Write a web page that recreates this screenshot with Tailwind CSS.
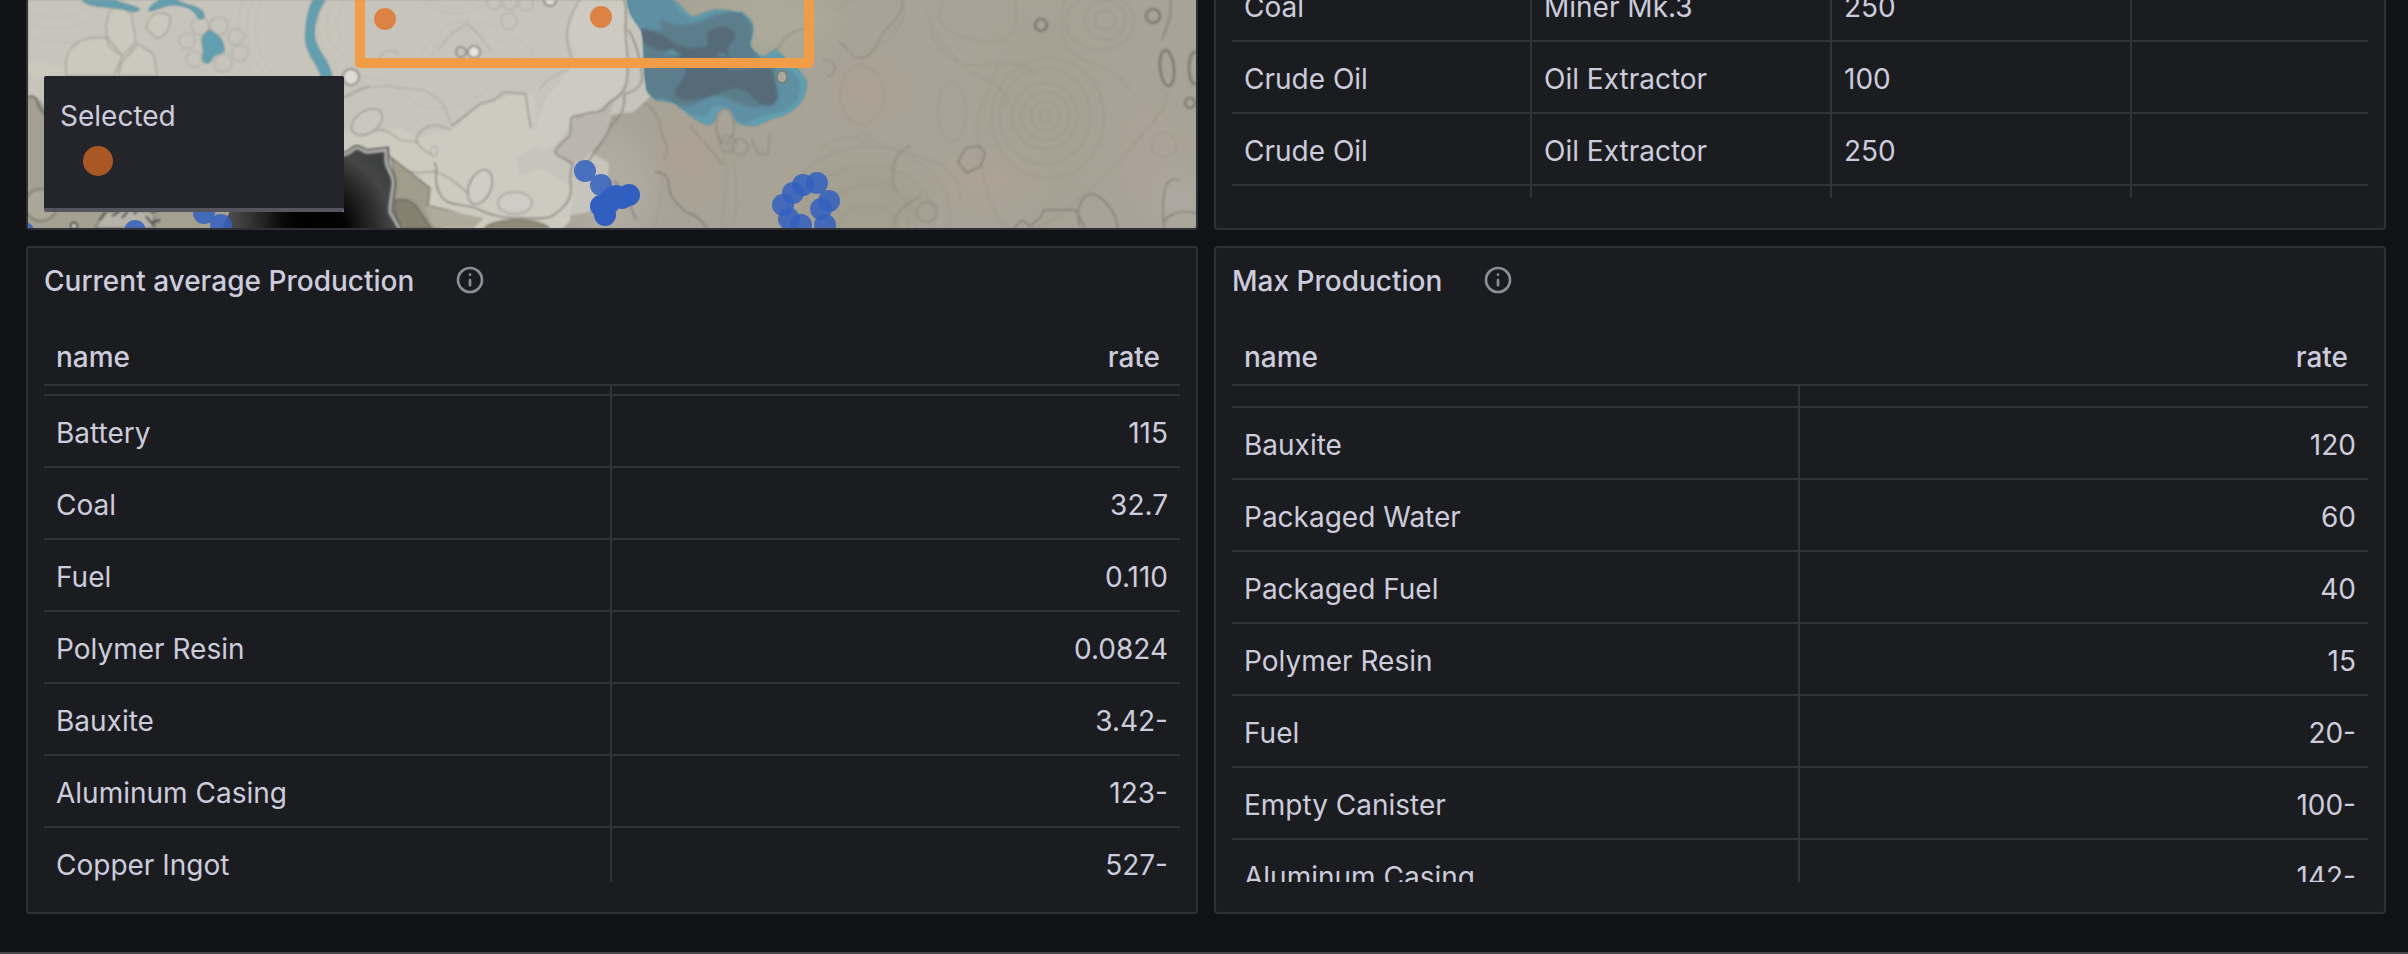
<!DOCTYPE html>
<html lang="en">
<head>
<meta charset="utf-8">
<meta name="viewport" content="width=device-width, initial-scale=1">
<title>Production dashboard</title>
<script src="https://cdn.jsdelivr.net/npm/@tailwindcss/browser@4"></script>
</head>
<body class="bg-[#111216] text-[#ccccdc] font-['Inter',sans-serif] text-[28px] leading-[44px]">
<main class="h-screen flex flex-col gap-4 overflow-hidden pl-[26px] pr-[22px] pb-[38px] border-b-2 border-[#47464b]">

  <div class="grid grid-cols-2 gap-4 h-[230px] shrink-0">
    <!-- World map -->
    <section aria-label="Map" class="relative overflow-hidden rounded-b border-2 border-t-0 border-[#2f3036] bg-[#a8a496]">
      <svg class="block w-full h-full" viewBox="28 0 1168 228" preserveAspectRatio="xMidYMid slice" role="img" aria-label="World map">
        <defs>
          <radialGradient id="void" gradientUnits="userSpaceOnUse" cx="308" cy="232" r="105">
            <stop offset="0" stop-color="#000"/><stop offset=".35" stop-color="#030303"/><stop offset=".62" stop-color="#2a2a2a"/><stop offset=".8" stop-color="#464646"/><stop offset="1" stop-color="#3c3f3e"/>
          </radialGradient>
          <linearGradient id="voidFade" x1="0" x2="1"><stop offset="0" stop-color="#555"/><stop offset=".3" stop-color="#3a3a3a"/><stop offset=".75" stop-color="#0c0c0c"/><stop offset="1" stop-color="#000"/></linearGradient>
          <filter id="soft" x="-20%" y="-20%" width="140%" height="140%"><feGaussianBlur stdDeviation="14"/></filter>
          <filter id="edge" x="-5%" y="-5%" width="110%" height="110%"><feGaussianBlur stdDeviation=".8"/></filter>
          <filter id="depth" x="-10%" y="-10%" width="120%" height="120%"><feGaussianBlur stdDeviation="1.8"/></filter>
          <path id="lake" d="M627 0c2 16 8 20 14 30 4 10 2 38 5 54 0 8 4 12 10 16 8 2 16 0 22 6 8 6 18 14 26 18 6 2 8 0 11-4 2-8 4-12 10-12s8 6 10 12c4 6 14 6 22 5 10-4 16-8 24-9 12-4 22-14 24-24 2-8 2-12-1-14-4-8-12-14-18-18-2-4-8-8-11-11-4 4-8 7-14 8-4-4-8-6-10-10s2-12 2-18-2-10-8-14c-2-4-6-2-10-3-6-2-12-2-20-2-6 0-12 4-22 7-6-2-10-10-14-12-2-4-6-4-9-6z"/>
          <clipPath id="lakeClip"><use href="#lake"/></clipPath>
        </defs>
        <rect x="28" width="1168" height="228" fill="#a7a396"/>
        <!-- ground tints -->
        <g filter="url(#soft)">
          <ellipse cx="690" cy="155" rx="30" ry="50" fill="#aba194"/>
          <ellipse cx="870" cy="90" rx="40" ry="35" fill="#aba195"/>
          <ellipse cx="1040" cy="115" rx="60" ry="110" fill="#a5a294"/>
          <ellipse cx="985" cy="180" rx="50" ry="30" fill="#aca296"/>
          <ellipse cx="1150" cy="160" rx="30" ry="60" fill="#aba397"/>
          <ellipse cx="770" cy="20" rx="60" ry="30" fill="#acaa9a"/>
          <ellipse cx="610" cy="190" rx="40" ry="60" fill="#b0aba1"/>
          <ellipse cx="860" cy="200" rx="70" ry="40" fill="#a39f91"/>
          <ellipse cx="1180" cy="200" rx="20" ry="20" fill="#b0aca4"/>
        </g>
        <g filter="url(#edge)" fill="none" stroke="#8e8b7d" stroke-width="1.4" opacity=".3">
          <circle cx="1045" cy="116" r="6"/><circle cx="1045" cy="116" r="14"/><circle cx="1045" cy="116" r="24"/><circle cx="1045" cy="116" r="33"/><ellipse cx="1045" cy="116" rx="45" ry="48"/><ellipse cx="1048" cy="118" rx="56" ry="60"/>
          <circle cx="1105" cy="20" r="10"/><circle cx="1105" cy="20" r="20"/><ellipse cx="1100" cy="22" rx="34" ry="28"/>
          <ellipse cx="868" cy="230" rx="30" ry="25"/><ellipse cx="868" cy="225" rx="48" ry="40"/><ellipse cx="868" cy="220" rx="66" ry="54"/><ellipse cx="868" cy="215" rx="82" ry="68"/>
          <ellipse cx="952" cy="112" rx="14" ry="30"/><ellipse cx="862" cy="95" rx="22" ry="29"/><circle cx="864" cy="138" r="6"/><circle cx="1164" cy="145" r="12"/>
          <path d="M930 30q15 40 55 35t50 10M925 10q20 50 60 70t10 30M945 0q-20 30 30 40t40-40M1065 0q-12 50 20 60t45 30M820 150q20-20 50-10t60 20 30 40M715 130q20 30 5 98M725 140q18 34 8 88M880 180q30 10 28 48M1000 60q-10 30-20 50t10 90 110-20 60-90"/>
          <path d="M837 10q20-20 60-10M900 0q10 20-10 38t-30 20M660 170q6 20-6 58"/>
        </g>
        <g filter="url(#edge)" fill="none" stroke="#77756b" stroke-width="1.4">
          <g opacity=".45">
            <path d="M903 0c2 14-14 24-20 34s-12 24-22 24-14-12-22-16M775 52c8-12 14-22 32-24M628 98c20 2 30 14 32 28s12 20 4 34M690 125c6 12 20 20 32 40M752 140l6 14 10 0 2-20M823 60c12-2 18 14 4 16M895 190c-6-20 0-40 16-44"/>
            <ellipse cx="725" cy="126" rx="9" ry="17"/><circle cx="728" cy="144" r="8"/><circle cx="740" cy="147" r="8"/>
            <circle cx="927" cy="212" r="10"/><path d="M895 228c-6-10 10-24 26-32"/>
          </g>
          <g opacity=".75">
            <path d="M655 172c12 0 14 8 14 16s14 24 22 26 12 10 18 16M614 180c10 12 16 24 22 40"/>
            <path d="M958 162l8-14 14-2 5 8-4 12-14 7zM1014 228l8-8 8 6 10-8 4-8h32l10 20M1080 226c-6-20 4-32 12-32s24 16 26 34M1164 228c-4-50 6-50 16-48M1163 224c6-14 26-14 34-10M1171 0l-1 18-8 22"/>
          </g>
          <g stroke-width="2.2">
            <circle cx="1041" cy="25" r="6"/><circle cx="1153" cy="16" r="7"/><ellipse cx="1167" cy="68" rx="7" ry="18" transform="rotate(-6 1167 68)"/><ellipse cx="1195" cy="68" rx="6" ry="16"/><circle cx="1190" cy="103" r="5"/>
          </g>
        </g>

        <!-- pale plateau -->
        <g filter="url(#edge)">
          <path d="M28 97l12 3 10 14 40 60 130 20 124-39 46-5 17 20h30l22 2 2 18 14 16 40 10 30 4 44-8 17-17 3-32-18-11 15-19 5-18 22-3 16-14 14-18 1-37-2-23 4-20V0H28z" fill="#c7c4bb"/>
          <path d="M28 97l9 2 8 16v113H28zM28 205h210l-40 23H28z" fill="#a3a092"/>
          <path d="M28 60c20 0 30 10 50 12s50 0 60 4H28z" fill="#cbc8bd"/>
          <path d="M110 10c10-6 20-2 22 8l4 24-14 14-14-10-2-22zM118 76l4-14 16-18 16 10 3 22zM66 60c4-20 24-24 42-22l14 18-8 20H66zM146 28c4-16 14-18 24-12 2 10-6 24-14 22z" fill="#cbc8bd" stroke="#a3a096" stroke-width="1.3"/>
          <g fill="none" stroke="#b0ada3" stroke-width="1.5" opacity=".8">
            <circle cx="200" cy="26" r="9"/><circle cx="219" cy="26" r="9"/><circle cx="187" cy="41" r="8"/><circle cx="236" cy="37" r="8"/><circle cx="240" cy="53" r="8"/><circle cx="223" cy="63" r="9"/><circle cx="194" cy="59" r="8"/>
            <circle cx="494" cy="2" r="7"/><circle cx="510" cy="3" r="7"/><circle cx="526" cy="4" r="7"/><circle cx="509" cy="21" r="8"/>
            <path d="M438 50l14-16 15-11 14 14 10 14M344 98l20-10 20-2 40 4 18 12 10 24M380 58c4-10 14-8 18-4M614 24c8 8 12 18 10 28M540 90c6-14 22-16 34-24M580 68c0 16 6 26 14 24s14-16 16-24"/>
          </g>
          <g fill="none" stroke="#b5b2a7" stroke-width="1" opacity=".5">
            <path d="M262 0q-18 38 12 76M253 0q-18 38 12 76M244 0q-16 38 10 76M318 0q-26 38 12 62M327 0q-26 38 16 62M336 0q-26 38 18 62M345 0q-20 30 8 52M28 24q40 14 70-10M28 36q40 14 64 0M28 12q40 14 70-10"/>
            <path d="M430 56q20-40 60-20t20 22M420 56q30-54 80-26t25 26M430 0q20 16 50 0M420 0q34 28 70 0M350 78q30-6 60 20t80-10"/>
          </g>
          <path d="M344 130l16 8 22-6 18-4 18 10 22-6 12-2 28-26 22-4 10-8 22 2 2 16-2 16 8 16-12 8-14 8 4 18 20-8 22 12 11 8-3 33-17 17-40 8-34-4-38-8-14-20-2-22-32-2-16-22-24 2-21 3z" fill="#cdcac0"/>
          <path d="M574 115l20-4 10-4 12-10-8 22-2 18-24 24-12 4-16-13 16-18z" fill="#bab6ad"/>
          <path d="M580 0h47l-2 22 4 22-2 38-14 16-16 14-22 3-12 20-6 8-16 8-4-22c0-10 6-30 22-46 8-12 20-24 14-34-8-14-2-34 4-49z" fill="#cdcac1"/>
          <path d="M580 0c-10 14-14 30-13 40s4 14 4 18" fill="none" stroke="#a09d93" stroke-width="1.4"/>
          <g fill="none" stroke="#88867c" stroke-width="1.6">
            <path d="M452 126l28-22 14-4 10-8 22 2 2 18 3 16" opacity=".7"/>
            <path d="M624 0c4 10 0 24 2 40s2 32 1 40-6 16-14 20-8 12-18 12-12 4-20 4-2 16-6 20-14 12-14 16 14 8 18 12c-6 14 0 22-3 32s-12 16-18 20-24 2-36 2-24-2-36-8-24-4-32-8-12-14-12-24 2-10-2-16M628 30c8 10 12 30 14 44s-10 18-18 20c2 24-10 24-14 34s-12 18-22 34"/>
            <path d="M434 156c-8-4-14-8-17-14s6-14 12-16 14 0 22 4M407 170c10 6 22 0 30 2s24 14 40 30" opacity=".55"/>
            <path d="M385 150l25 38c10 4 14 8 14 18l8 22M430 206c14 4 20 4 34 10" stroke="#7a786c"/>
            <path d="M344 96c10-2 14-8 26-10M364 136c10-10 22-8 36 4l18 2" opacity=".5"/>
          </g>
          <path d="M392 158l38 30-2 18 14 22h-46l-4-20 2-24z" fill="#a19d8d" stroke="#716e61" stroke-width="1.3"/>
          <path d="M395 200c12-2 20 2 24 10l12 18h-35z" fill="#858070" stroke="#615e51" stroke-width="1.2"/>
          <path d="M424 206l30 6 30 6-10 10h-40z" fill="#aeaa9c"/>
          <path d="M484 228c8-10 52-12 66 0z" fill="#8f8a79" stroke="#716e61"/>
          <ellipse cx="480" cy="187" rx="11" ry="18" transform="rotate(22 480 187)" fill="#d0cdc6" stroke="#928f86" stroke-width="1.6"/>
          <ellipse cx="515" cy="203" rx="17" ry="11" fill="#cfccc5" stroke="#a6a39a" stroke-width="1.5"/>
          <ellipse cx="367" cy="122" rx="17" ry="11" transform="rotate(-34 367 122)" fill="#cac7be" stroke="#a09d94" stroke-width="1.5"/>
          <ellipse cx="434" cy="151" rx="3" ry="5" fill="#d0cec7" stroke="#a09d94"/>
          <circle cx="461" cy="52" r="5" fill="#c8c5bd" stroke="#8f8c84" stroke-width="2"/>
          <circle cx="474" cy="52" r="6" fill="#e6e3df" stroke="#8f8c84" stroke-width="2"/>
          <circle cx="351" cy="77" r="8" fill="#dfdcd8" stroke="#8f8c84" stroke-width="2"/>
          <path d="M544 0c0 8 12 8 12 0" fill="#dedbd6" stroke="#85827a" stroke-width="2"/>
        </g>

        <!-- unexplored void -->
        <path d="M225 228l6-16h113v-57l13-7 10 4 18-2 2 18 6 14-2 30 6 16z" fill="url(#void)"/>
        <path d="M222 228l8-17h70v17z" fill="url(#voidFade)"/>
        <g filter="url(#edge)" fill="none">
          <path d="M340 155c12 0 12-7 17-7s6 5 12 4l17-2c0 8-1 12 2 18s6 10 5 18-3 16-3 26l9 16" stroke="#4d4d4a" stroke-width="6"/>
          <path d="M340 155c12 0 12-7 17-7s6 5 12 4l17-2c0 8-1 12 2 18s6 10 5 18-3 16-3 26l9 16" stroke="#b4b5b3" stroke-width="2.6"/>
        </g>

        <!-- rocks along the lower left edge -->
        <g filter="url(#edge)">
          <path d="M28 97c8-2 10 4 10 8l7 10" fill="none" stroke="#77746a" stroke-width="2.5"/>
          <circle cx="41" cy="205" r="16" fill="#aaa799" stroke="#817e73" stroke-width="2"/>
          <path d="M95 228l10-16 20-2 28 2 2 16z" fill="#b6b3aa" stroke="#7d7a70" stroke-width="1.6"/>
          <path d="M100 220l6-8M112 216l8-5M122 218l6-7M134 214l4-4M146 216l8 10M152 222l8-2M150 212l8-2" stroke="#57544c" stroke-width="2.4"/>
          <circle cx="74" cy="226" r="3" fill="#e2dfda" stroke="#4c4a44" stroke-width="2"/>
        </g>

        <!-- water -->
        <g filter="url(#edge)" fill="#629fb0" stroke="#5b8a95" stroke-width="1">
          <path d="M82 0c6 6 16 6 26 7s18 2 26 5l6-3c-8-4-18-5-26-9z"/>
          <path d="M149 11c12-2 16-7 28-6s18 6 22 14l5-1-1-6c-6-6-12-6-18-8s-8-4-10-5h-14c-4 4-12 6-12 12z"/>
          <path d="M209 30c6 4 12 6 14 14s2 8-5 10-6 8-10 9-7-3-5-9-3-12 0-18z"/>
          <path d="M313 0c-6 12-8 30-7 42s12 22 16 36h10c-2-16-14-26-17-38s2-28 10-40z"/>
          <use href="#lake"/>
        </g>
        <g clip-path="url(#lakeClip)">
          <g filter="url(#depth)">
            <path d="M622-6h46l12 18 12 8 24-8 30 4 8 18-2 12 12 14 20-4 14 12 4 20-4 12-12 12-22 4-20 8-10-6-8-12-12 0-8 12-16-4-50-26-8-30z" fill="#5f8fa3"/>
            <path d="M661 18c14 10 24 8 40 4 14-6 22-12 40-10l12 14-2 18 6 14 20 6-6 34-8 8c-20 6-30-10-46-10s-22 14-36 10-16-10-26-6l-14-14-2-56 22 0z" fill="#5b7e8c"/>
            <path d="M639 30c8-4 14 2 22 4s10 10 20 12 16 2 24 0-6-14 10-18 22 4 20 10-10 8-6 18-4 12 0 14l40-2c4 4 6 10 8 20s0 16-6 18-16-4-20-10-14-10-24-6-20 10-38 10-16-8-10-16 10-12 2-22-12-12-22-12-10-8-20-8z" fill="#576b78"/>
            <path d="M646 66l8-8 6 8M663 54l9-5 10 7zM716 55l6-2 6 4z" fill="#5c93a6"/>
          </g>
          <path d="M770 52c8 10 28 16 32 28s-2 26-14 32-26 6-36 12" fill="none" stroke="#619fb1" stroke-width="5" filter="url(#edge)"/>
        </g>
        <ellipse cx="782" cy="77" rx="5" ry="6" fill="#aba79b" stroke="#777c76" stroke-width="1.5"/>

        <!-- selection frame -->
        <path d="M360-10V63H809V-10" fill="none" stroke="#f19d48" stroke-width="10" stroke-linejoin="round"/>
        <g fill="#dc8245"><circle cx="385" cy="19" r="11"/><circle cx="601" cy="17" r="11"/></g>

        <!-- resource nodes -->
        <g fill="#3260bf" fill-opacity=".85">
          <circle cx="585" cy="171" r="11"/><circle cx="601" cy="185" r="11"/>
          <circle cx="817" cy="183" r="11"/><circle cx="803" cy="185" r="11"/><circle cx="793" cy="193" r="11"/><circle cx="783" cy="205" r="11"/><circle cx="789" cy="219" r="11"/><circle cx="801" cy="225" r="11"/><circle cx="825" cy="225" r="11"/><circle cx="829" cy="201" r="11"/><circle cx="821" cy="209" r="11"/>
          <circle cx="204" cy="213" r="11"/><circle cx="221" cy="225" r="11"/><circle cx="135" cy="231" r="11"/><circle cx="23" cy="232" r="11"/>
        </g>
        <g fill="#315fc0"><circle cx="601" cy="206" r="11"/><circle cx="605" cy="215" r="11"/><circle cx="609" cy="203" r="11"/><circle cx="616" cy="196" r="11"/><circle cx="622" cy="198" r="11"/><circle cx="629" cy="195" r="11"/><circle cx="611" cy="199" r="11"/></g>
      </svg>
      <div class="absolute left-4 bottom-4 flex flex-col gap-2 w-[300px] h-[136px] rounded-xs bg-[#24252b] border-b-4 border-[#55565d] px-4 pt-[18px]">
        <div>Selected</div>
        <div class="ml-[23px] size-[30px] rounded-full bg-[#a95825]"></div>
      </div>
    </section>

    <!-- Resource nodes table -->
    <section aria-label="Resource nodes" class="flex flex-col justify-end overflow-hidden rounded-b border-2 border-t-0 border-[#2f3036] bg-[#1b1c20] px-4 pb-[30px]">
      <table class="w-full shrink-0 table-fixed border-separate border-spacing-0 [&_td]:border-white/10 [&_td]:border-b-2 [&_td]:border-r-2 [&_td:last-child]:border-r-0 [&_td]:h-[72px] [&_td]:px-3 [&_td]:pt-1">
        <colgroup><col class="w-[300px]"><col class="w-[300px]"><col class="w-[300px]"><col></colgroup>
        <tbody>
          <tr><td>Coal</td><td>Miner Mk.3</td><td>250</td><td></td></tr>
          <tr><td>Crude Oil</td><td>Oil Extractor</td><td>100</td><td></td></tr>
          <tr><td>Crude Oil</td><td>Oil Extractor</td><td>250</td><td></td></tr>
        </tbody>
      </table>
      <div aria-hidden="true" class="grid h-3 shrink-0 grid-cols-[300px_300px_300px_1fr]"><i class="border-r-2 border-white/10"></i><i class="border-r-2 border-white/10"></i><i class="border-r-2 border-white/10"></i></div>
    </section>
  </div>

  <div class="grid min-h-0 flex-1 grid-cols-2 gap-4">
    <section class="flex min-h-0 flex-col rounded border-2 border-[#2f3036] bg-[#1b1c20] px-4 pb-[30px]">
      <header class="flex h-16 shrink-0 items-center gap-10">
        <h2 class="pt-0.5 font-medium">Current average Production</h2>
        <button type="button" aria-label="Panel description" class="text-[#8e8e9a]">
          <svg class="size-8" viewBox="0 0 24 24" fill="none" stroke="currentColor" stroke-width="2" stroke-linecap="round"><circle cx="12" cy="12" r="9"/><path d="M12 12v4M12 8v.01"/></svg>
        </button>
      </header>
      <div class="min-h-0 overflow-hidden">
        <table class="w-full table-fixed border-separate border-spacing-0 text-left [&_td]:border-white/10 [&_th]:border-white/10 [&_th]:border-b-2 [&_td]:border-b-2 [&_td:first-child]:border-r-2 [&_td]:px-3 [&_td:last-child]:text-right [&_tbody_td]:pt-1">
          <thead><tr><th scope="col" class="h-[74px] pt-[18px] px-3 font-medium">name</th><th scope="col" class="h-[74px] pt-[18px] pl-3 pr-5 text-right font-medium">rate</th></tr></thead>
          <tbody aria-hidden="true"><tr class="h-[10px]"><td></td><td></td></tr></tbody>
          <tbody class="[&_td]:h-[72px]">
            <tr><td>Battery</td><td>115</td></tr>
            <tr><td>Coal</td><td>32.7</td></tr>
            <tr><td>Fuel</td><td>0.110</td></tr>
            <tr><td>Polymer Resin</td><td>0.0824</td></tr>
            <tr><td>Bauxite</td><td>3.42-</td></tr>
            <tr><td>Aluminum Casing</td><td>123-</td></tr>
            <tr><td>Copper Ingot</td><td>527-</td></tr>
          </tbody>
        </table>
      </div>
    </section>

    <section class="flex min-h-0 flex-col rounded border-2 border-[#2f3036] bg-[#1b1c20] px-4 pb-[30px]">
      <header class="flex h-16 shrink-0 items-center gap-10">
        <h2 class="pt-0.5 font-medium">Max Production</h2>
        <button type="button" aria-label="Panel description" class="text-[#8e8e9a]">
          <svg class="size-8" viewBox="0 0 24 24" fill="none" stroke="currentColor" stroke-width="2" stroke-linecap="round"><circle cx="12" cy="12" r="9"/><path d="M12 12v4M12 8v.01"/></svg>
        </button>
      </header>
      <div class="min-h-0 overflow-hidden">
        <table class="w-full table-fixed border-separate border-spacing-0 text-left [&_td]:border-white/10 [&_th]:border-white/10 [&_th]:border-b-2 [&_td]:border-b-2 [&_td:first-child]:border-r-2 [&_td]:px-3 [&_td:last-child]:text-right [&_tbody_td]:pt-1">
          <thead><tr><th scope="col" class="h-[74px] pt-[18px] px-3 font-medium">name</th><th scope="col" class="h-[74px] pt-[18px] pl-3 pr-5 text-right font-medium">rate</th></tr></thead>
          <tbody aria-hidden="true"><tr class="h-[22px]"><td></td><td></td></tr></tbody>
          <tbody class="[&_td]:h-[72px]">
            <tr><td>Bauxite</td><td>120</td></tr>
            <tr><td>Packaged Water</td><td>60</td></tr>
            <tr><td>Packaged Fuel</td><td>40</td></tr>
            <tr><td>Polymer Resin</td><td>15</td></tr>
            <tr><td>Fuel</td><td>20-</td></tr>
            <tr><td>Empty Canister</td><td>100-</td></tr>
            <tr><td>Aluminum Casing</td><td>142-</td></tr>
          </tbody>
        </table>
      </div>
    </section>
  </div>
</main>
</body>
</html>
